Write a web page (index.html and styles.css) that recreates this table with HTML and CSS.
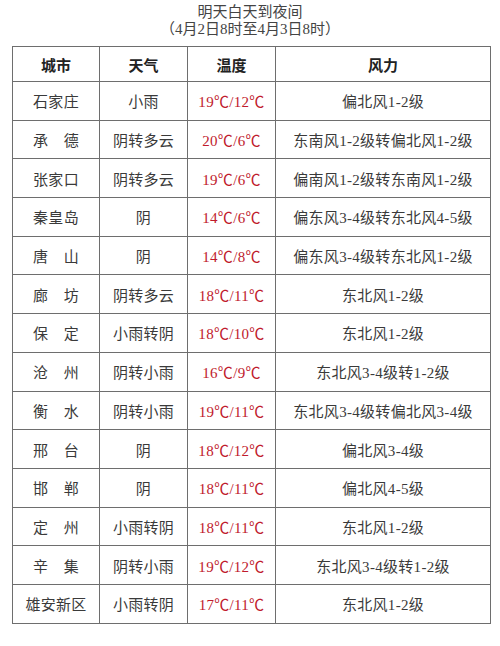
FILE: index.html
```html
<!DOCTYPE html>
<html lang="zh">
<head>
<meta charset="utf-8">
<link rel="stylesheet" href="styles.css">
</head>
<body>
<div class="title">
  <div class="t1">明天白天到夜间</div>
  <div class="t2">（4月2日8时至4月3日8时）</div>
</div>
<table class="wx">
  <colgroup><col class="c1"><col class="c2"><col class="c3"><col class="c4"></colgroup>
  <thead>
    <tr class="head"><th>城市</th><th>天气</th><th>温度</th><th>风力</th></tr>
  </thead>
  <tbody>
    <tr><td>石家庄</td><td>小雨</td><td class="temp">19℃/12℃</td><td>偏北风1-2级</td></tr>
    <tr><td>承　德</td><td>阴转多云</td><td class="temp">20℃/6℃</td><td>东南风1-2级转偏北风1-2级</td></tr>
    <tr><td>张家口</td><td>阴转多云</td><td class="temp">19℃/6℃</td><td>偏南风1-2级转东南风1-2级</td></tr>
    <tr><td>秦皇岛</td><td>阴</td><td class="temp">14℃/6℃</td><td>偏东风3-4级转东北风4-5级</td></tr>
    <tr><td>唐　山</td><td>阴</td><td class="temp">14℃/8℃</td><td>偏东风3-4级转东北风1-2级</td></tr>
    <tr><td>廊　坊</td><td>阴转多云</td><td class="temp">18℃/11℃</td><td>东北风1-2级</td></tr>
    <tr><td>保　定</td><td>小雨转阴</td><td class="temp">18℃/10℃</td><td>东北风1-2级</td></tr>
    <tr><td>沧　州</td><td>阴转小雨</td><td class="temp">16℃/9℃</td><td>东北风3-4级转1-2级</td></tr>
    <tr><td>衡　水</td><td>阴转小雨</td><td class="temp">19℃/11℃</td><td>东北风3-4级转偏北风3-4级</td></tr>
    <tr><td>邢　台</td><td>阴</td><td class="temp">18℃/12℃</td><td>偏北风3-4级</td></tr>
    <tr><td>邯　郸</td><td>阴</td><td class="temp">18℃/11℃</td><td>偏北风4-5级</td></tr>
    <tr><td>定　州</td><td>小雨转阴</td><td class="temp">18℃/11℃</td><td>东北风1-2级</td></tr>
    <tr><td>辛　集</td><td>阴转小雨</td><td class="temp">19℃/12℃</td><td>东北风3-4级转1-2级</td></tr>
    <tr><td>雄安新区</td><td>小雨转阴</td><td class="temp">17℃/11℃</td><td>东北风1-2级</td></tr>
  </tbody>
</table>
</body>
</html>
```
FILE: styles.css
```css
html, body {
  margin: 0;
  padding: 0;
  background: #ffffff;
}
body {
  font-family: "Liberation Serif", "Noto Sans CJK SC", serif;
  color: #3a3a3a;
  width: 500px;
  height: 646px;
  overflow: hidden;
}
.title {
  padding-top: 4px;
  text-align: center;
  font-size: 15px;
  line-height: 17px;
  color: #444;
  height: 42px;
}
.wx {
  margin-left: 12px;
  width: 478px;
  border-collapse: collapse;
  table-layout: fixed;
  font-size: 15px;
}
.c1 { width: 87px; }
.c2 { width: 88px; }
.c3 { width: 88px; }
.c4 { width: 215px; }
.wx th, .wx td {
  border: 1.5px solid #6e6e6e;
  text-align: center;
  vertical-align: middle;
  padding: 0;
  white-space: nowrap;
}
.wx th {
  font-weight: bold;
  color: #222;
  height: 34px;
  font-size: 15px;
}
.wx td {
  height: 37.7px;
  letter-spacing: 0.3px;
}
.temp {
  color: #c01a2c;
}
```
